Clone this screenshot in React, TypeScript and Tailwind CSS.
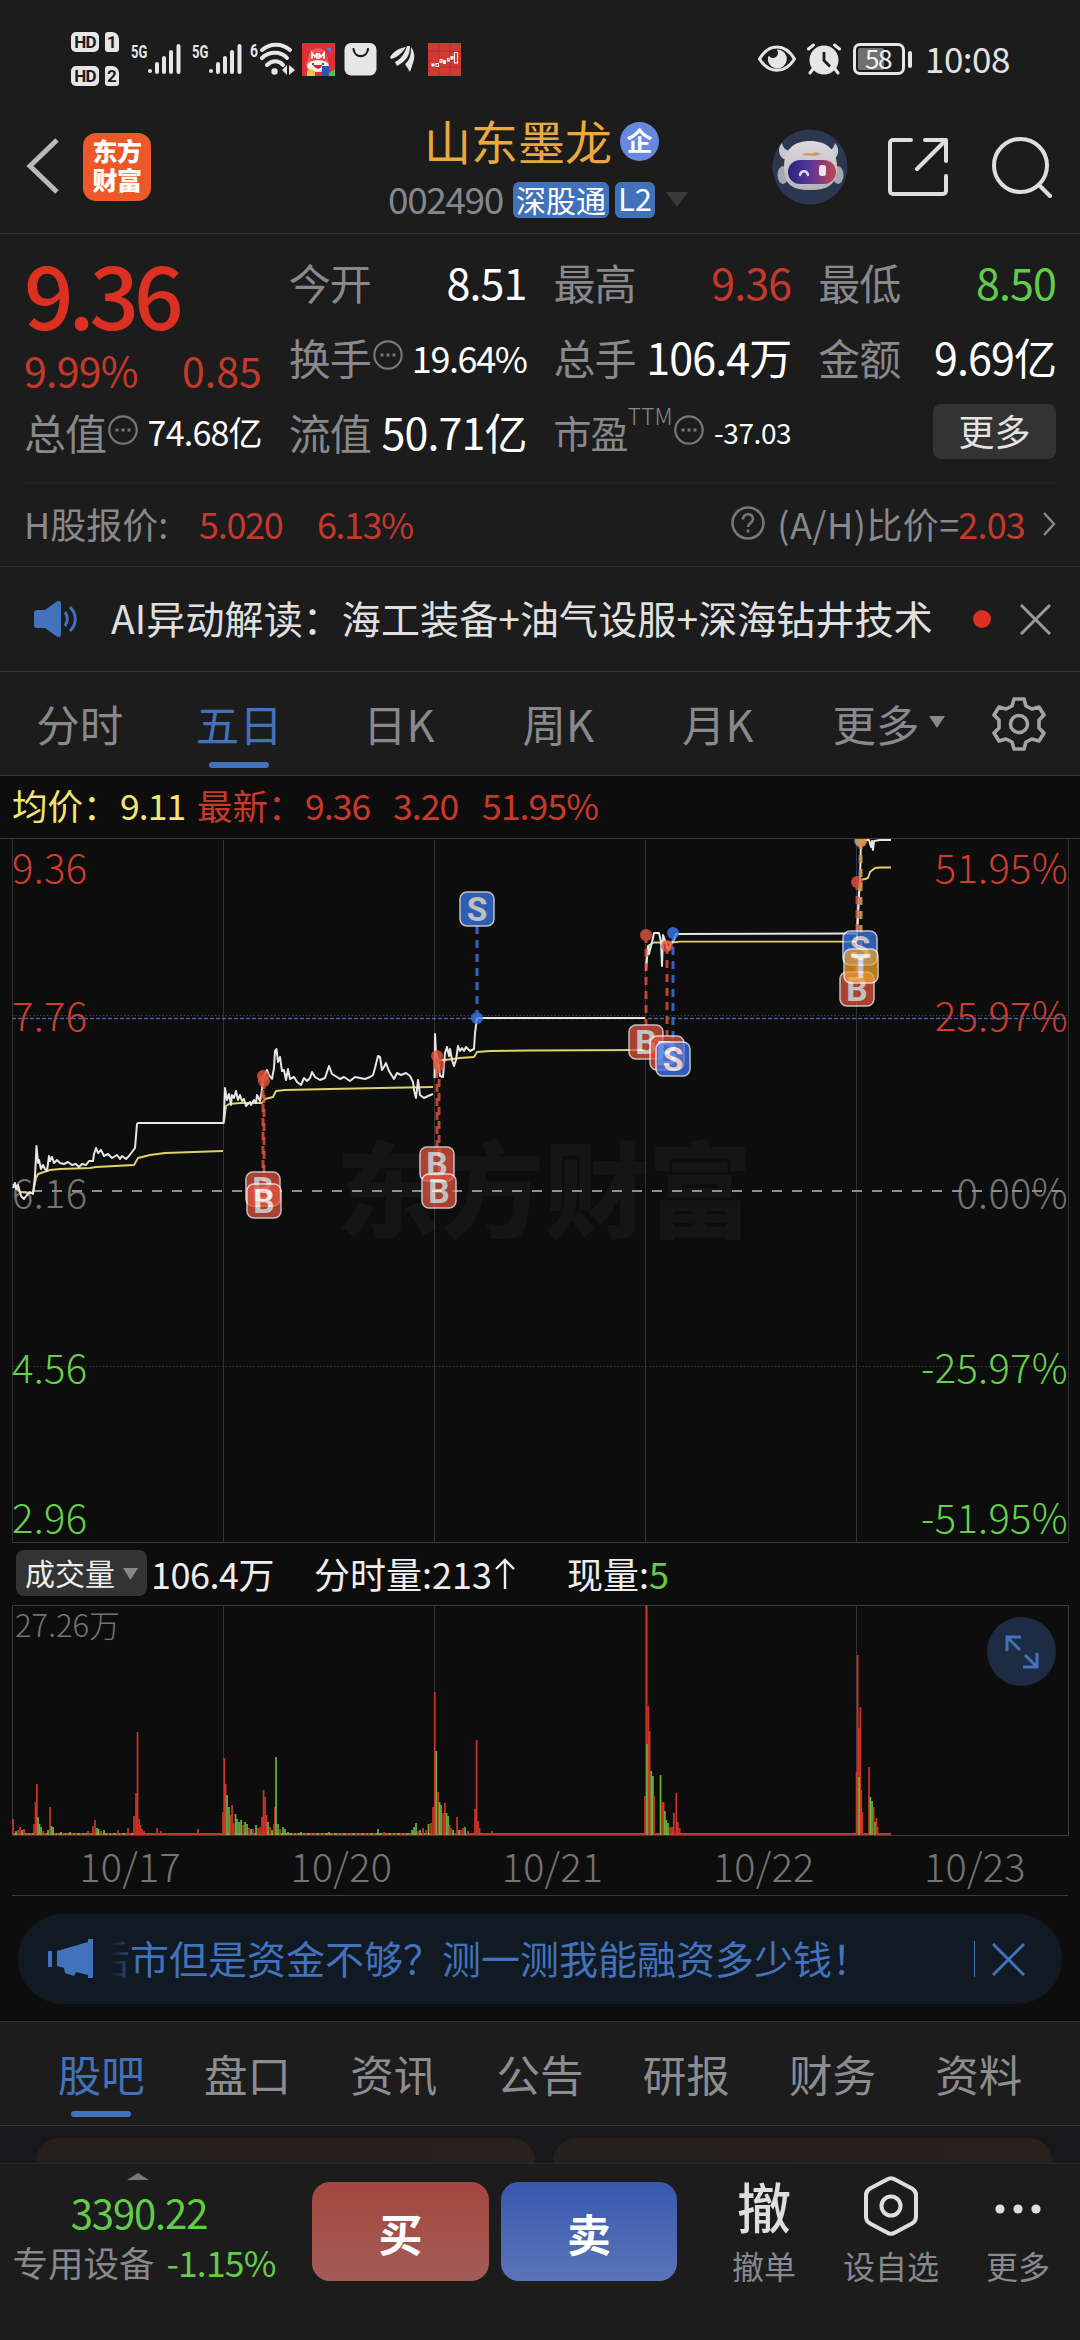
import React from "react";
import clsx from "clsx";

type Point = [number, number];
type Volume = [x: number, height: number, color: "r" | "g"];
type MarkerKind = "B" | "S" | "T";

const RED = "#d03c2e";
const GREEN = "#66d04c";

const priceDays: Point[][] = [
    [[13, 350], [15, 345], [16, 351], [18, 347], [21, 358], [24, 361], [27, 357], [30, 354], [33, 356], [35, 338], [36.5, 308], [38, 325], [39, 322], [41, 331], [43, 327], [45, 331], [47, 333], [49, 318], [50, 323], [52, 319], [54, 325], [57, 322], [60, 325], [64, 326], [68, 324], [72, 327], [76, 326], [79, 329], [82, 326], [86, 327], [89, 323], [93, 323], [94, 316], [96, 310], [98, 315], [101, 312], [104, 318], [108, 316], [112, 320], [117, 317], [120, 321], [122, 318], [126, 321], [129, 318], [132, 314], [135, 310], [137, 286], [138, 285], [223, 285]],
    [[223.5, 286], [225, 250], [227, 262], [229, 256], [231, 267], [232, 257], [234, 260], [236, 253], [238, 262], [240, 257], [242, 263], [244, 261], [246, 268], [250, 264], [251, 267], [254, 262], [256, 265], [257, 257], [260, 263], [262, 252], [263, 240], [267, 232], [269, 237], [272, 241], [274, 230], [275, 213], [276.5, 211], [278, 224], [280, 219], [282, 233], [284, 232], [286, 242], [288, 231], [290, 241], [294, 239], [297, 244], [301, 247], [304, 240], [307, 243], [310, 240], [312, 234], [315, 239], [320, 242], [325, 240], [327, 234], [329, 228], [332, 236], [337, 239], [340, 241], [344, 239], [350, 243], [355, 239], [360, 240], [365, 241], [370, 239], [373, 237], [375, 230], [377, 222], [378, 218], [380, 219], [382, 232], [384, 229], [386, 225], [389, 233], [394, 241], [397, 235], [401, 237], [406, 235], [410, 238], [413, 244], [414, 252], [416, 260], [418, 242], [420, 257], [424, 260], [428, 258], [433, 256]],
    [[434.5, 240], [435, 196], [436, 215], [438, 222], [440, 238], [443, 239], [445, 215], [447, 209], [449, 218], [450, 211], [452, 222], [454, 228], [456, 222], [458, 208], [460, 213], [462, 210], [464, 213], [466, 209], [470, 213], [474, 211], [475, 195], [477, 180], [645, 180]],
    [[646, 133], [647, 118], [648, 108], [649, 116], [652, 104], [654, 95], [659, 95], [661, 104], [662, 128], [663, 97], [666, 105], [668, 112], [671, 106], [674, 102], [676, 96], [856, 95.5]],
    [[857, 94], [860, 40], [861, 3], [867, 2], [869, 2], [871, 9], [872, 3], [873, 12], [874, 3], [880, 2], [891, 2]],
];

const averageDays: Point[][] = [
    [[13, 346], [16, 350], [20, 354], [33, 355], [36, 340], [38, 336], [50, 332], [60, 331], [90, 330], [96, 329], [134, 327], [138, 320], [150, 317], [165, 315], [223, 313]],
    [[224, 284], [226, 268], [229, 266], [240, 265], [262, 265], [265, 261], [273, 259], [276, 253], [285, 252], [330, 251], [380, 250], [433, 249]],
    [[435, 240], [438, 222], [445, 222], [460, 220], [474, 219], [477, 214], [490, 213], [530, 212.5], [645, 212]],
    [[646, 127], [649, 107], [654, 104.5], [672, 104.5], [680, 103.6], [856, 103.6]],
    [[857, 100], [859, 52], [860, 42], [865, 41], [868, 40], [870, 34], [875, 30], [880, 29.5], [891, 29.5]],
];

const markers: { kind: MarkerKind; x: number; y: number; from: number }[] = [
    { kind: "B", x: 263, y: 351, from: 238 },
    { kind: "B", x: 264, y: 363, from: 243 },
    { kind: "B", x: 437, y: 326, from: 218 },
    { kind: "B", x: 439, y: 353, from: 227 },
    { kind: "S", x: 477, y: 71, from: 180 },
    { kind: "B", x: 646, y: 204, from: 97 },
    { kind: "B", x: 667, y: 215, from: 108 },
    { kind: "S", x: 673, y: 221, from: 95 },
    { kind: "S", x: 860, y: 110, from: 3 },
    { kind: "B", x: 857, y: 151, from: 44 },
    { kind: "T", x: 861, y: 128, from: 3 },
];

const markerColor = { B: "#e4533d", S: "#3c79ef", T: "#f0a02c" };

const volumes: Volume[] = [
    [13, 16, "r"], [16, 4, "g"], [18, 5, "r"], [20, 8, "r"], [22, 5, "g"], [24, 6, "r"], [34, 11, "r"], [35.5, 33, "r"], [36.8, 51, "r"], [38, 18, "g"], [39.5, 11, "g"], [41, 8, "g"], [43, 4, "r"], [48, 5, "g"], [50, 28, "r"], [51.5, 9, "g"], [53, 8, "g"], [61, 3, "g"], [70, 3, "g"], [88, 4, "r"], [93, 9, "r"], [95, 15, "r"], [97, 7, "g"], [98.5, 6, "g"], [101, 4, "r"], [104, 5, "g"], [118, 5, "r"], [128, 7, "r"], [134, 19, "r"], [136, 42, "r"], [137.5, 103, "r"], [139, 16, "r"], [140.5, 10, "r"], [142, 6, "r"], [144, 4, "r"], [157, 7, "r"], [161, 4, "r"], [198, 6, "r"],
    [223, 23, "r"], [224.3, 77, "r"], [225.6, 51, "r"], [227, 40, "g"], [229, 28, "g"], [230.5, 20, "r"], [232, 30, "r"], [233.5, 12, "r"], [235.5, 21, "g"], [237, 16, "g"], [239, 13, "g"], [241, 15, "g"], [243, 10, "r"], [245, 13, "g"], [247, 11, "g"], [249, 7, "r"], [251, 6, "g"], [253, 6, "r"], [256, 10, "g"], [258, 7, "r"], [260, 8, "r"], [262, 18, "r"], [263.5, 45, "r"], [265, 38, "r"], [266.5, 20, "r"], [268, 13, "g"], [270, 8, "r"], [272, 5, "g"], [274, 11, "r"], [275, 28, "r"], [276, 78, "g"], [278, 11, "g"], [280, 6, "r"], [283, 8, "g"], [285, 6, "g"], [288, 3, "g"], [301, 3, "g"], [329, 3, "g"], [378, 6, "g"], [384, 3, "r"], [412, 5, "g"], [414, 8, "g"], [416, 12, "g"], [418, 4, "r"], [420, 5, "g"], [423, 7, "r"], [426, 5, "r"], [428.5, 11, "g"], [431, 12, "r"], [433, 28, "r"],
    [434.7, 143, "r"], [436.2, 84, "g"], [438, 43, "r"], [439.5, 33, "g"], [441, 30, "g"], [443, 22, "r"], [444.8, 32, "r"], [446.5, 22, "g"], [448, 19, "g"], [449.5, 10, "r"], [451, 7, "r"], [453, 5, "g"], [457, 18, "r"], [459, 5, "g"], [461, 5, "r"], [463, 7, "r"], [465, 8, "g"], [468, 4, "r"], [475, 26, "r"], [476.5, 95, "r"], [478, 14, "r"], [479.5, 7, "r"], [492, 4, "r"],
    [645, 39, "r"], [646.6, 230, "r"], [648.2, 129, "r"], [649.6, 104, "r"], [646.9, 91, "g"], [651.2, 64, "g"], [652.8, 59, "g"], [654, 39, "r"], [660.5, 60, "g"], [662.2, 33, "r"], [663.6, 33, "r"], [664.8, 24, "g"], [666.3, 15, "g"], [668, 12, "g"], [670, 8, "r"], [672, 8, "r"], [673.8, 22, "r"], [676.3, 42, "r"], [677.8, 13, "r"], [679.6, 7, "r"],
    [856.5, 63, "r"], [857.6, 180, "r"], [859, 107, "r"], [860.3, 128, "r"], [859, 58, "g"], [861.2, 45, "r"], [862.3, 23, "r"], [869, 68, "r"], [870.4, 38, "g"], [872, 34, "g"], [873.6, 28, "r"], [875, 13, "g"], [876.4, 17, "r"], [877.6, 8, "r"],
];

const toPath = (points: Point[]) => "M" + points.map((p) => p.join(" ")).join("L");

const HdBadge = function ({ sim }: { sim: string }) {
    return (
        <div className="flex items-center gap-[6px]">
            <span className="flex h-5 w-7 items-center justify-center rounded-[5px] bg-[#e6e6e6] font-['Roboto',sans-serif] text-[17px] font-bold tracking-tighter text-[#1c1c1c]">
                HD
            </span>
            <span className="flex h-5 w-[14px] items-center justify-center rounded-[3px] rounded-tr-[7px] bg-[#e6e6e6] font-['Roboto',sans-serif] text-[17px] font-bold text-[#1c1c1c]">
                {sim}
            </span>
        </div>
    );
};

const Signal = function () {
    return (
        <div className="flex h-8 w-[50px] items-start">
            <span className="w-[17px] origin-left scale-x-[0.72] font-['Roboto',sans-serif] text-[18px] font-bold text-[#e6e6e6]">
                5G
            </span>
            <svg className="h-8 w-[33px]" viewBox="0 0 33 32" stroke="#e6e6e6" strokeWidth="4" strokeLinecap="round">
                <path d="M2 28v0M9 21v8M16 15v14M23 9v20M30.5 3v26" />
            </svg>
        </div>
    );
};

const StatusBar = function () {
    return (
        <div className="flex h-[100px] items-center pt-[18px] pr-[70px] pl-[71px]">
            <div className="flex flex-col gap-[14px]">
                <HdBadge sim="1" />
                <HdBadge sim="2" />
            </div>
            <div className="ml-3 flex gap-[11px]">
                <Signal />
                <Signal />
            </div>
            <svg className="ml-2 h-9 w-[46px]" viewBox="0 0 46 36">
                <text x="0" y="16" fontFamily="Roboto" fontWeight="700" fontSize="18" textLength="8" lengthAdjust="spacingAndGlyphs" fill="#e6e6e6">6</text>
                <g fill="none" stroke="#e6e6e6" strokeWidth="4" strokeLinecap="round">
                    <path d="M12 9c8-7 20-7 28 0M12 17c7-7 19-7 25 0M17 24c5-5 12-5 16 0" />
                </g>
                <circle cx="24.500" cy="30.500" r="3.200" fill="#e6e6e6" />
                <path d="M32 29l5-5v10zM45 29l-6-5v10z" fill="#e6e6e6" />
            </svg>
            <svg className="ml-[6px] h-[33px] w-[33px]" viewBox="0 0 33 33">
                <rect width="33" height="33" fill="#dd3036" />
                <path d="M7 12c2-8 16-10 18 1l2 8-3 8H6L4 22z" fill="#f05a5c" />
                <path d="M9 9h15v9H9z" fill="#e9413f" />
                <path d="M10 16V10l3 4 2-4v6M17 16v-6l2 4 3-4v6" fill="none" stroke="#fff" strokeWidth="1.600" />
                <ellipse cx="16" cy="23" rx="11" ry="6" fill="#f4efef" />
                <path d="M11 22c3 5 8 5 9 0z" fill="#cf2930" />
                <circle cx="11" cy="21" r="1" fill="#222" />
                <circle cx="21" cy="21" r="1" fill="#222" />
                <path d="M5 33v-4c2-4 7-3 8 0v4z" fill="#f7c63c" />
                <path d="M20 23h7v10h-7z" fill="#2756b8" />
                <path d="M27 30l6-4v7h-6z" fill="#57bd4e" />
                <path d="M24 5h5v5z" fill="#4e7ed8" />
            </svg>
            <svg className="ml-[9px] h-[33px] w-[33px]" viewBox="0 0 33 33">
                <rect width="32" height="32.500" x="0.500" rx="6.500" fill="#e6e6e6" />
                <path d="M9.500 6c1 9.500 13.500 9.500 14.500 0" fill="none" stroke="#1c1c1c" strokeWidth="2.200" strokeLinecap="round" />
            </svg>
            <svg className="ml-[13px] h-[28px] w-[25px]" viewBox="0 0 25 28" fill="#e6e6e6">
                <path d="M0 12C4 6 9 3 16 2 12 8 8 12 1 14zM5 17C11 14 15 8 17 1l3 0c0 10-4 15-13 20zM20 27l-5-8c5-4 6-9 6-17 4 5 4 11 2 16z" />
            </svg>
            <svg className="ml-[13px] h-[33px] w-[33px]" viewBox="0 0 33 33">
                <rect width="33" height="33" fill="#cf3a34" />
                <path d="M0 8h33M0 24h33M11 0v33M22 0v33" stroke="#b8302c" />
                <g fill="#fff">
                    <rect x="3.500" y="20.500" width="3" height="3" />
                    <rect x="15" y="17" width="3" height="4" />
                    <rect x="22.500" y="13" width="3" height="3.500" />
                </g>
                <g fill="none" stroke="#fff">
                    <rect x="8" y="20.500" width="2.500" height="3" />
                    <rect x="12" y="16.500" width="2" height="3" />
                    <rect x="19.500" y="15.500" width="2" height="2.500" />
                    <rect x="26.500" y="9.500" width="3" height="10.500" />
                </g>
            </svg>

            <svg className="ml-auto h-[28px] w-[38px]" viewBox="0 0 38 28">
                <path d="M1.500 14C11-2 27-2 36.500 14 27 29 11 29 1.500 14z" fill="none" stroke="#e6e6e6" strokeWidth="3" />
                <path d="M19 4.500A9.500 9.500 0 1 1 10 12l1-1a5 5 0 1 0 8-6z" fill="#e6e6e6" />
            </svg>
            <svg className="ml-[11px] h-[32px] w-[34px]" viewBox="0 0 34 32">
                <circle cx="17" cy="17" r="14.500" fill="#e6e6e6" />
                <path d="M1.500 6l5-4M32.500 6l-5-4M6 26l-3 4M28 26l3 4" stroke="#e6e6e6" strokeWidth="3" strokeLinecap="round" />
                <path d="M17 9v8.500l6 6" fill="none" stroke="#1c1c1c" strokeWidth="2.800" />
            </svg>
            <div className="ml-3 flex items-center gap-[3px]">
                <div className="flex h-8 w-[52px] rounded-[7px] border-[3px] border-[#e6e6e6] p-[2px]">
                    <div className="flex h-full w-[26px] items-center rounded-[2px] bg-[#707070] pb-[2px] pl-[7px]">
                        <span className="text-[26px] tracking-[-1.5px] text-[#f0f0f0]">58</span>
                    </div>
                </div>
                <div className="h-[17px] w-1 rounded-sm bg-[#e6e6e6]" />
            </div>
            <span className="ml-[13px] w-[85px] pb-[3px] text-[35px] tracking-[-0.5px] text-[#e2e2e2]">10:08</span>
        </div>
    );
};

const Robot = function () {
    return (
        <svg className="h-[76px] w-[76px]" viewBox="0 0 76 76">
            <defs>
                <linearGradient id="visor" x1="0" x2="1">
                    <stop offset="0" stopColor="#28267c" />
                    <stop offset="0.450" stopColor="#5a3599" />
                    <stop offset="1" stopColor="#c04650" />
                </linearGradient>
                <linearGradient id="shell" x1="0" x2="0" y1="0" y2="1">
                    <stop offset="0" stopColor="#dcdade" />
                    <stop offset="1" stopColor="#b6b3bb" />
                </linearGradient>
            </defs>
            <circle cx="38" cy="38" r="37.500" fill="#2c3850" />
            <path d="M10 14c-6 7-2 16 5 17l5-9c-6 0-9-3-10-8zM63 14c6 7 3 16-4 17l-6-9c6 0 9-3 10-8z" fill="#c9c7cd" />
            <ellipse cx="11" cy="46" rx="5.500" ry="9" fill="#a9a6b0" />
            <ellipse cx="66" cy="46" rx="5.500" ry="9" fill="#a9a6b0" />
            <path d="M38 12c17 0 27 9 27 26 0 16-7 23-27 23S12 54 12 38c0-17 9-26 26-26z" fill="url(#shell)" />
            <rect x="16" y="31" width="48" height="24" rx="12" fill="url(#visor)" />
            <path d="M28 46c1-5 7-5 8 0" fill="none" stroke="#d8d4f4" strokeWidth="2.500" strokeLinecap="round" />
            <rect x="47" y="36" width="7" height="11" rx="2.500" fill="#efe3f0" />
            <path d="M30 26c4-3 8-1 11-2s6 0 8 1l-6 2z" fill="#c49a6c" />
        </svg>
    );
};

const Header = function () {
    return (
        <div className="flex h-[134px] items-center border-b border-[#333] pr-[27px] pl-[26px]">
            <svg className="mt-[-2px] h-[56px] w-[33px]" viewBox="0 0 33 56" fill="none" stroke="#b9b9b9" strokeWidth="5">
                <path d="M31 2L4 28l27 26" />
            </svg>
            <div className="ml-6 flex h-[68px] w-[68px] flex-col items-center justify-center rounded-[13px] bg-[#ec5829] pb-1 text-[25px] leading-[29px] font-black tracking-[-0.5px] text-white">
                <span>东方</span>
                <span>财富</span>
            </div>

            <div className="ml-[237px] flex w-[302px] flex-col">
                <div className="flex h-[58px] items-center pb-[6px] pl-[36px]">
                    <span className="pb-[5px] text-[47px] text-[#e9a940]">山东墨龙</span>
                    <span className="ml-2 flex h-[39px] w-[39px] items-center justify-center rounded-full bg-[#6688dd] pb-[3px] text-[26px] font-bold text-white">
                        企
                    </span>
                </div>
                <div className="mt-[8px] flex h-9 items-center">
                    <span className="w-[125px] pb-[3px] text-[37px] tracking-[-1.4px] text-[#86868b]">002490</span>
                    <span className="flex h-9 w-24 items-center justify-center rounded-md bg-[#4171b8] pb-[2px] text-[30px] text-white">
                        深股通
                    </span>
                    <span className="ml-[6px] flex h-9 w-10 items-center justify-center rounded-md bg-[#4171b8] pb-1 text-[31px] text-white">
                        L2
                    </span>
                    <svg className="ml-[11px] h-[15px] w-[22px]" viewBox="0 0 22 15">
                        <path d="M0 0h22L11 15z" fill="#3a3a3b" />
                    </svg>
                </div>
            </div>

            <div className="ml-auto flex items-center">
                <Robot />
                <svg className="ml-[39px] h-[62px] w-[62px]" viewBox="0 0 62 62" fill="none" stroke="#dedede" strokeWidth="4" strokeLinecap="round" strokeLinejoin="round">
                    <path d="M24 4H6a3 3 0 0 0-3 3v48a3 3 0 0 0 3 3h50a3 3 0 0 0 3-3V40M38 4h21v21M58 5L30 33" />
                </svg>
                <svg className="ml-[42px] h-[62px] w-[62px]" viewBox="0 0 62 62" fill="none" stroke="#dedede" strokeWidth="4" strokeLinecap="round">
                    <circle cx="29.500" cy="29.500" r="26.500" />
                    <path d="M48 49l11 11" />
                </svg>
            </div>
        </div>
    );
};

const Dots = function () {
    return (
        <svg className="h-[30px] w-[30px]" viewBox="0 0 30 30">
            <circle cx="15" cy="15" r="13.700" fill="none" stroke="#77777b" strokeWidth="2.200" />
            <path d="M7.500 13.500h3v3h-3zM13.500 13.500h3v3h-3zM19.500 13.500h3v3h-3z" fill="#77777b" />
        </svg>
    );
};

type QuoteCellProps = {
    label: string;
    value: string;
    info?: boolean;
    valueClass?: string;
};

const QuoteCell = function ({ label, value, info, valueClass = "text-[43px] tracking-[-0.9px] text-white" }: QuoteCellProps) {
    return (
        <div className="flex h-[75px] items-center">
            <span className="text-[42px] tracking-[-1px] text-[#88888d]">{label}</span>
            {info && (
                <span className="ml-[2px] pb-1">
                    <Dots />
                </span>
            )}
            <span className={clsx("ml-auto", valueClass)}>{value}</span>
        </div>
    );
};

const Quotes = function () {
    return (
        <div className="px-6">
            <div className="grid h-[250px] grid-cols-4 content-start gap-x-[27px] border-b-2 border-[#222] pt-[10px]">
                <div className="row-span-2 flex flex-col">
                    <div className="pt-[5px] text-[87px] font-medium tracking-[-5px] text-[#dc3022]">9.36</div>
                    <div className="mt-[13px] flex justify-between text-[41px] text-[#c4392b]">
                        <span className="tracking-[-0.7px]">9.99%</span>
                        <span>0.85</span>
                    </div>
                </div>
                <QuoteCell label="今开" value="8.51" />
                <QuoteCell label="最高" value="9.36" valueClass="text-[43px] tracking-[-0.9px] text-[#c4392b]" />
                <QuoteCell label="最低" value="8.50" valueClass="text-[43px] tracking-[-0.9px] text-[#62cb48]" />
                <QuoteCell label="换手" value="19.64%" info valueClass="text-[36px] tracking-[-1.4px] text-white" />
                <QuoteCell label="总手" value="106.4万" />
                <QuoteCell label="金额" value="9.69亿" />
                <QuoteCell label="总值" value="74.68亿" info valueClass="text-[34px] tracking-[-0.8px] text-white" />
                <QuoteCell label="流值" value="50.71亿" />
                <div className="flex h-[75px] items-center">
                    <span className="text-[38px] tracking-[-1px] text-[#88888d]">市盈</span>
                    <span className="self-start pt-[10px] text-[23px] font-light text-[#88888d]">TTM</span>
                    <span className="ml-[2px] pb-1">
                        <Dots />
                    </span>
                    <span className="ml-auto text-[28px] tracking-[-0.4px] text-white">-37.03</span>
                </div>
                <div className="flex h-[75px] items-center justify-end">
                    <button className="h-[55px] w-[123px] rounded-lg bg-[#333] pb-1 text-[36px] text-[#e4e4e4]">更多</button>
                </div>
            </div>
            <div className="flex h-[82px] items-center pb-[5px] text-[36px] text-[#88888d]">
                <span className="w-[175px]">H股报价:</span>
                <span className="w-[118px] tracking-[-1.3px] text-[#c4392b]">5.020</span>
                <span className="tracking-[-1.5px] text-[#c4392b]">6.13%</span>
                <svg className="ml-auto h-[34px] w-[34px]" viewBox="0 0 34 34" fill="none" stroke="#77777b" strokeWidth="2.600">
                    <circle cx="17" cy="17" r="15.500" />
                    <path d="M12 13.500c0-7 10-7 10-.500 0 4-5 4-5 8" />
                    <path d="M17 23.500v3" />
                </svg>
                <span className="ml-[12px] w-[181px] tracking-[0.5px]">(A/H)比价=</span>
                <span className="tracking-[-0.8px] text-[#c4392b]">2.03</span>
                <svg className="mt-[3px] ml-[18px] h-6 w-[13px]" viewBox="0 0 13 24" fill="none" stroke="#88888d" strokeWidth="2.400">
                    <path d="M1 1l10 11L1 23" />
                </svg>
            </div>
        </div>
    );
};

const AiNotice = function () {
    return (
        <div className="flex h-[106px] items-center border-t border-b border-t-[#2a2a2a] border-b-[#333] pr-[29px] pl-[34px]">
            <svg className="h-9 w-[45px]" viewBox="0 0 45 36">
                <path d="M3 9h8L22 1c3-2 5-1 5 2v30c0 3-2 4-5 2l-11-8H3c-2 0-3-1-3-3V12c0-2 1-3 3-3z" fill="#4272bc" />
                <path d="M31 11c3 4 3 10 0 14M36 6c7 7 7 17 0 24" fill="none" stroke="#4272bc" strokeWidth="3" />
            </svg>
            <span className="ml-8 pb-1 text-[39px] tracking-[0.1px] text-[#e0e0e0]">AI异动解读：海工装备+油气设服+深海钻井技术</span>
            <span className="ml-auto h-[18px] w-[18px] rounded-full bg-[#dc3022]" />
            <svg className="ml-[29px] h-[31px] w-[31px]" viewBox="0 0 31 31" stroke="#9a9a9a" strokeWidth="3">
                <path d="M1 1l29 29M30 1L1 30" />
            </svg>
        </div>
    );
};

const chartTabs = ["分时", "五日", "日K", "周K", "月K"];

const ChartTabs = function () {
    return (
        <div className="flex h-[104px] items-center border-b border-[#333] text-[43.5px] text-[#88888d]">
            {chartTabs.map((tab) => (
                <div
                    key={tab}
                    className={clsx(
                        "relative flex h-full w-[159.5px] items-center justify-center",
                        tab === "五日" && "text-[#4272bc]"
                    )}
                >
                    {tab}
                    {tab === "五日" && (
                        <span className="absolute bottom-[7px] h-[6px] w-[60px] rounded-full bg-[#4272bc]" />
                    )}
                </div>
            ))}
            <span className="ml-[35px]">更多</span>
            <svg className="mb-1 ml-[9px] h-3 w-4" viewBox="0 0 16 12">
                <path d="M0 0h16L8 12z" fill="#88888d" />
            </svg>
            <svg className="mr-[34px] ml-auto h-[54px] w-[54px]" viewBox="0 0 54 54" fill="none" stroke="#a4a4a6" strokeWidth="3.600" strokeLinejoin="round">
                <path d="M22 2h10l2 7 6 3 7-2 5 8-5 5v8l5 5-5 8-7-2-6 3-2 7H22l-2-7-6-3-7 2-5-8 5-5v-8l-5-5 5-8 7 2 6-3z" />
                <circle cx="27" cy="27" r="8.500" />
            </svg>
        </div>
    );
};

const Marker = function ({ kind, x, y }: { kind: MarkerKind; x: number; y: number }) {
    return (
        <g opacity="0.740">
            <rect x={x - 17} y={y - 17} width="34" height="34" rx="7" fill={markerColor[kind]} stroke="#fff" strokeWidth="1.500" />
            <text x={x} y={y + 12} textAnchor="middle" fontFamily="Roboto" fontWeight="700" fontSize="33.500" fill="#fff">
                {kind}
            </text>
        </g>
    );
};

const PriceChart = function () {
    return (
        <svg className="block h-[706px] w-[1080px]" viewBox="0 0 1080 706">
            <defs>
                <clipPath id="plot">
                    <rect x="12" y="1" width="1057" height="704" />
                </clipPath>
            </defs>
            <text x="544" y="392" textAnchor="middle" fontWeight="900" fontSize="104" fill="#151515">
                东方财富
            </text>
            <path d="M0 0.500H1080M12.500 704.500H1068.500" stroke="#3a3a3a" />
            <path d="M12.500 0V704M223.500 2V704M434.500 2V704M645.500 2V704M856.500 2V704M1068.500 0V704" stroke="#333" />
            <path d="M12 177.500H1068M12 528.500H1068" stroke="#3c3c3c" strokeDasharray="1.500 2" />
            <g fontSize="40" fontWeight="300" letterSpacing="0.300">
                <g fill={RED}>
                    <text x="12" y="45">9.36</text>
                    <text x="12" y="193">7.76</text>
                </g>
                <text x="12" y="370" fill="#747474">6.16</text>
                <g fill={GREEN}>
                    <text x="12" y="545">4.56</text>
                    <text x="12" y="695">2.96</text>
                </g>
                <g textAnchor="end">
                    <g fill={RED}>
                        <text x="1068" y="45">51.95%</text>
                        <text x="1068" y="193">25.97%</text>
                    </g>
                    <text x="1068" y="370" fill="#747474">0.00%</text>
                    <g fill={GREEN}>
                        <text x="1068" y="545">-25.97%</text>
                        <text x="1068" y="695">-51.95%</text>
                    </g>
                </g>
            </g>
            <path d="M32 353H1064" stroke="#8f8f8f" strokeWidth="2" strokeDasharray="10 10" />
            <path d="M12 180.500H1068" stroke="#3d66a8" strokeWidth="1.300" strokeDasharray="4 2" />
            <g clipPath="url(#plot)" fill="none" strokeLinejoin="round">
                {averageDays.map((day, i) => (
                    <path key={i} d={toPath(day)} stroke="#ddd368" strokeWidth="1.900" />
                ))}
                {priceDays.map((day, i) => (
                    <path key={i} d={toPath(day)} stroke="#e6e6e6" strokeWidth="2" />
                ))}
                {markers.map((m, i) => (
                    <g key={i} opacity="0.800">
                        <path
                            d={`M${m.x} ${m.from}V${m.y > m.from ? m.y - 17 : m.y + 17}`}
                            stroke={markerColor[m.kind]}
                            strokeWidth="3"
                            strokeDasharray="8 6"
                        />
                        <circle cx={m.x} cy={m.from} r="6" fill={markerColor[m.kind]} />
                    </g>
                ))}
            </g>
            {markers.map((m, i) => (
                <Marker key={i} kind={m.kind} x={m.x} y={m.y} />
            ))}
        </svg>
    );
};

const VolumeChart = function () {
    return (
        <div className="relative">
            <svg className="block h-[232px] w-[1080px]" viewBox="0 0 1080 232">
                <path d="M12.500 230.500V0.500H1068.500V230.500H12.500" fill="none" stroke="#3a3a3a" />
                <path d="M223.500 0V230M434.500 0V230M645.500 0V230M856.500 0V230" stroke="#333" />
                <text x="15" y="32" fontSize="31" fontWeight="300" fill="#747474">27.26万</text>
                <path d="M12 229H891" stroke="#c0392f" strokeWidth="2" />
                <path d="M14 229H136M226 229H433" stroke="#8d9a45" strokeWidth="2" strokeDasharray="3 2.500 1.500 2" />
                {volumes.map(([x, height, color], i) => (
                    <rect
                        key={i}
                        x={x - 0.8}
                        y={230 - height}
                        width="1.700"
                        height={height}
                        fill={color === "r" ? "#cf3526" : "#69b43c"}
                    />
                ))}
            </svg>
            <button className="absolute top-[12px] right-6 flex h-[69px] w-[69px] items-center justify-center rounded-full bg-[#1d2c42]">
                <svg className="h-[34px] w-[34px]" viewBox="0 0 34 34" fill="none" stroke="#4272bc" strokeWidth="3">
                    <path d="M16 2H2v14M2 2l13 13M18 32h14V18M32 32L20 20" />
                </svg>
            </button>
        </div>
    );
};

const dates = ["10/17", "10/20", "10/21", "10/22", "10/23"];

const ChartPanel = function () {
    return (
        <div className="h-[1245px] bg-[#0d0d0d]">
            <div className="flex h-[62px] items-center pb-1 pl-[12px] text-[35.5px] tracking-[-0.9px] text-[#c8392b]">
                <span className="w-[108px] tracking-normal text-[#f2e671]">均价：</span>
                <span className="w-[77px] text-[#f2e671]">9.11</span>
                <span className="w-[108px] tracking-normal">最新：</span>
                <span className="w-[88px]">9.36</span>
                <span className="w-[89px]">3.20</span>
                <span>51.95%</span>
            </div>
            <PriceChart />
            <div className="flex h-[61px] items-center pb-[3px] pl-4 text-[36px] text-[#eee]">
                <div className="flex h-[46px] w-[131px] items-center rounded-lg bg-[#333] pb-[3px] pl-[9px] text-[30px]">
                    成交量
                    <svg className="mt-1 ml-[8px] h-3 w-[15px]" viewBox="0 0 15 12">
                        <path d="M0 0h15L7.500 12z" fill="#88888d" />
                    </svg>
                </div>
                <span className="ml-[4px] w-[163px] tracking-[-0.5px]">106.4万</span>
                <span className="flex w-[253px] items-center">
                    分时量:213
                    <svg className="ml-[3px] mt-[2px] h-[32px] w-[20px]" viewBox="0 0 20 32" fill="none" stroke="#eee" strokeWidth="2.400">
                        <path d="M10 31V2M1 11l9-9 9 9" />
                    </svg>
                </span>
                <span>
                    现量:<span className="text-[#62cb48]">5</span>
                </span>
            </div>
            <VolumeChart />
            <div className="mx-3 flex h-[59px] items-center border-b border-[#3a3a3a] pb-[2px]">
                {dates.map((date) => (
                    <span key={date} className="flex-1 pl-[25px] text-center text-[39.5px] font-light tracking-[0.3px] text-[#747474]">
                        {date}
                    </span>
                ))}
            </div>
            <div className="mx-[18px] mt-[18px] flex h-[90px] items-center rounded-full bg-[#111922] pr-[36px] pl-[30px] text-[#4272bc]">
                <svg className="h-10 w-[46px]" viewBox="0 0 46 40" fill="#4272bc">
                    <path d="M0 12h4v16H0zM9 12L40 3V0h5v39h-5v-3l-12-3-2 4-9-3-1-5-7-2z" />
                </svg>
                <div className="relative ml-[16px] flex w-[864px] overflow-hidden">
                    <span className="-ml-[19px] pb-1 text-[39px] leading-[50px]">
                        后市但是资金不够？测一测我能融资多少钱！
                    </span>
                    <span className="absolute top-0 left-0 h-full w-[22px] bg-linear-to-r from-[#111922] to-[#111922]/40" />
                </div>
                <span className="h-9 w-px shrink-0 bg-[#4272bc]" />
                <svg className="ml-[17px] h-[33px] w-[33px] shrink-0" viewBox="0 0 33 33" stroke="#4272bc" strokeWidth="3">
                    <path d="M1 1l31 31M32 1L1 32" />
                </svg>
            </div>
        </div>
    );
};

const infoTabs = ["股吧", "盘口", "资讯", "公告", "研报", "财务", "资料"];

const InfoTabs = function () {
    return (
        <div>
            <div className="flex h-[105px] border-t border-b border-[#333] px-7 text-[43.5px] text-[#8d8d91]">
                {infoTabs.map((tab, i) => (
                    <div
                        key={tab}
                        className={clsx(
                            "relative flex h-full flex-1 items-center justify-center",
                            i === 0 && "text-[#4272bc]"
                        )}
                    >
                        {tab}
                        {i === 0 && <span className="absolute bottom-[8px] h-[6px] w-[60px] rounded-full bg-[#4272bc]" />}
                    </div>
                ))}
            </div>
            <div className="flex h-[37px] gap-[18px] overflow-hidden bg-[#18181a] px-[28px] pt-[12px] pl-9">
                <div className="h-[25px] flex-1 rounded-t-[24px] bg-linear-to-r from-[#261f1e] to-[#2a201e]" />
                <div className="h-[25px] flex-1 rounded-t-[24px] bg-linear-to-r from-[#261f1e] to-[#2a201e]" />
            </div>
        </div>
    );
};

const TradeBar = function () {
    return (
        <div className="flex h-[176px] items-start border-t border-[#262626]">
            <div className="flex w-[288px] flex-col items-center pt-[9px]">
                <svg className="mr-3 h-[7px] w-[22px]" viewBox="0 0 22 7">
                    <path d="M11 0l11 7H0z" fill="#77777b" />
                </svg>
                <span className="mt-[12px] mr-[10px] text-[40px] tracking-[-1.1px] text-[#62cb48]">3390.22</span>
                <div className="mt-[12px] flex gap-3 text-[35.5px]">
                    <span className="text-[#88888d]">专用设备</span>
                    <span className="tracking-[-0.8px] text-[#62cb48]">-1.15%</span>
                </div>
            </div>
            <button className="mt-[18px] ml-6 h-[99px] w-[177px] rounded-[18px] bg-linear-to-b from-[#a3463e] to-[#a35c56] pt-[2px] text-[44px] font-bold text-white">
                买
            </button>
            <button className="mt-[18px] ml-3 h-[99px] w-[176px] rounded-[18px] bg-linear-to-b from-[#3858ad] to-[#5a74b8] pt-[2px] text-[44px] font-bold text-white">
                卖
            </button>
            <div className="flex flex-1 text-[32px] text-[#88888d]">
                <div className="ml-[48px] flex w-[78px] flex-col items-center">
                    <span className="h-[85px] pt-[15px] text-[54px] font-medium text-[#dedede]">撤</span>
                    <span>撤单</span>
                </div>
                <div className="ml-[38px] flex w-[100px] flex-col items-center">
                    <span className="h-[85px] pt-[12px]">
                        <svg className="h-[60px] w-[54px]" viewBox="0 0 54 60" fill="none" stroke="#dedede" strokeWidth="4" strokeLinejoin="round">
                            <path d="M23 3.500q4-2.500 8 0l17 9q4 2.500 4 6.500v22q0 4-4 6.500l-17 9q-4 2.500-8 0l-17-9q-4-2.500-4-6.500V19q0-4 4-6.500z" />
                            <circle cx="27" cy="30" r="9.500" />
                        </svg>
                    </span>
                    <span>设自选</span>
                </div>
                <div className="ml-[37px] flex w-[80px] flex-col items-center">
                    <span className="h-[85px] pt-[40px]">
                        <svg className="h-[10px] w-[46px]" viewBox="0 0 46 10" fill="#dedede">
                            <circle cx="5" cy="5" r="4.600" />
                            <circle cx="23" cy="5" r="4.600" />
                            <circle cx="41" cy="5" r="4.600" />
                        </svg>
                    </span>
                    <span>更多</span>
                </div>
            </div>
        </div>
    );
};

const App = function () {
    return (
        <div className="h-[2340px] w-[1080px] overflow-hidden bg-[#1c1c1c] font-['Noto_Sans_CJK_SC',sans-serif] leading-none font-normal whitespace-nowrap">
            <StatusBar />
            <Header />
            <Quotes />
            <AiNotice />
            <ChartTabs />
            <ChartPanel />
            <InfoTabs />
            <TradeBar />
        </div>
    );
};

export default App;
